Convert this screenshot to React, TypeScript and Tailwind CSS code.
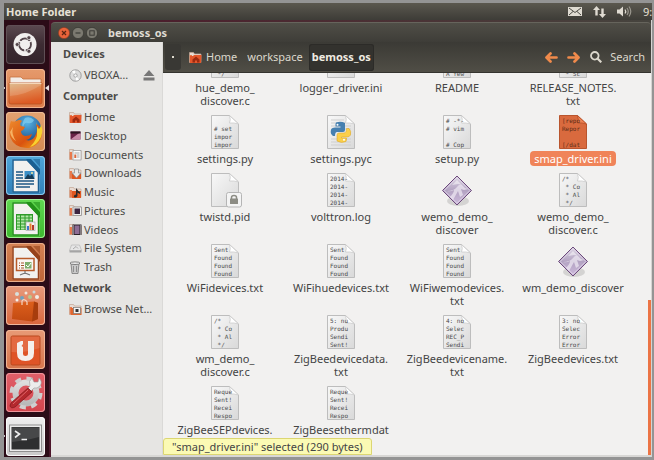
import type { ReactNode } from 'react';

type FileKind = 'text' | 'python' | 'locked' | 'exec';

interface FileItem {
  label: string[];
  kind: FileKind;
  preview?: string;
  selected?: boolean;
}

const files: FileItem[] = [
  { label: ['hue_demo_', 'discover.c'], kind: 'text', preview: '\n\n\n */' },
  { label: ['logger_driver.ini'], kind: 'text' },
  { label: ['README'], kind: 'text', preview: '\n\n\nA few' },
  { label: ['RELEASE_NOTES.', 'txt'], kind: 'text', preview: '\n\n\n * Sc' },
  { label: ['settings.py'], kind: 'text', preview: '\n# set\nimpor\nimpor' },
  { label: ['settings.pyc'], kind: 'python' },
  { label: ['setup.py'], kind: 'text', preview: '# -*-\n# vim\n\n# Cop' },
  { label: ['smap_driver.ini'], kind: 'text', preview: '[repo\nRepor\n\n[/dat', selected: true },
  { label: ['twistd.pid'], kind: 'locked' },
  { label: ['volttron.log'], kind: 'text', preview: '2014-\n2014-\n2014-\n2014-' },
  { label: ['wemo_demo_', 'discover'], kind: 'exec' },
  { label: ['wemo_demo_', 'discover.c'], kind: 'text', preview: '/*\n * Co\n * Al\n */' },
  { label: ['WiFidevices.txt'], kind: 'text', preview: 'Sent\nFound\nFound\nFound' },
  { label: ['WiFihuedevices.txt'], kind: 'text', preview: 'Sent\nFound\nFound\nFound' },
  { label: ['WiFiwemodevices.', 'txt'], kind: 'text', preview: 'Sent\nFound\nFound\nFound' },
  { label: ['wm_demo_discover'], kind: 'exec' },
  { label: ['wm_demo_', 'discover.c'], kind: 'text', preview: '/*\n * Co\n * Al\n */' },
  { label: ['ZigBeedevicedata.', 'txt'], kind: 'text', preview: '5: nu\nProdu\nSendi\nSent!' },
  { label: ['ZigBeedevicename.', 'txt'], kind: 'text', preview: '4: no\nSelec\nREC_P\nSendi' },
  { label: ['ZigBeedevices.txt'], kind: 'text', preview: '3: no\nSelec\nError\nError' },
  { label: ['ZigBeeSEPdevices.', 'txt'], kind: 'text', preview: 'Reque\nSent!\nRecei\nRespo' },
  { label: ['ZigBeesethermdat', 'a.txt'], kind: 'text', preview: 'Reque\nSent!\nRecei\nRespo' },
];

function Defs() {
  return (
    <svg className="absolute size-0" aria-hidden="true">
      <defs>
        <linearGradient id="paper" x1="0" y1="0" x2="1" y2="1">
          <stop offset="0" stopColor="#f8f8f8" />
          <stop offset="1" stopColor="#d9d9d9" />
        </linearGradient>
        <linearGradient id="folderFace" x1="0" y1="0" x2="0.3" y2="1">
          <stop offset="0" stopColor="#d9b27c" />
          <stop offset="0.5" stopColor="#e0814a" />
          <stop offset="1" stopColor="#dc5a24" />
        </linearGradient>
        <linearGradient id="gem" x1="0" y1="0" x2="0" y2="1">
          <stop offset="0" stopColor="#ddd5e4" />
          <stop offset="0.5" stopColor="#b3a3c2" />
          <stop offset="1" stopColor="#cdb9dc" />
        </linearGradient>
        <radialGradient id="globe" cx="0.5" cy="0.25" r="0.8">
          <stop offset="0" stopColor="#57b5e6" />
          <stop offset="1" stopColor="#123a78" />
        </radialGradient>
        <linearGradient id="fox" x1="0" y1="0" x2="1" y2="1">
          <stop offset="0" stopColor="#ee8a2c" />
          <stop offset="0.6" stopColor="#d9520f" />
          <stop offset="1" stopColor="#f5a31c" />
        </linearGradient>
        <linearGradient id="bag" x1="0" y1="0" x2="0" y2="1">
          <stop offset="0" stopColor="#dd5f1c" />
          <stop offset="1" stopColor="#c24a12" />
        </linearGradient>
        <linearGradient id="gearFill" x1="0" y1="0" x2="0" y2="1">
          <stop offset="0" stopColor="#dedede" />
          <stop offset="1" stopColor="#b9b9b9" />
        </linearGradient>
      </defs>
    </svg>
  );
}

function FileIcon({ item }: { item: FileItem }) {
  if (item.kind === 'exec') {
    return (
      <svg className="size-[34px]" viewBox="0 0 34 34" aria-hidden="true">
        <ellipse cx="18" cy="28" rx="11" ry="5" fill="#000" opacity="0.12" />
        <path d="M17 3 31.500 17.500 17 32 2.500 17.500Z" fill="url(#gem)" stroke="#6d4a7c" strokeWidth="1" />
        <path d="M17 4.700 29.800 17.500 17 30.300 4.200 17.500Z" fill="none" stroke="#e6deec" strokeWidth="0.700" />
        <path d="M7 18q7 0 10-4 2-3 5-2 2 3 6 4l-4 1-3-1 2 6-3 2-2-6-5 9-3-3q4-4 4-7-3 2-7 1Z" fill="#efe9f4" opacity="0.7" />
        <path d="M12 12 17 7l5 5-4-1Z" fill="#fff" opacity="0.5" />
      </svg>
    );
  }
  const selected = item.selected === true;
  return (
    <span className="relative block h-[34px] w-[28px]">
      <svg className="absolute inset-0 size-full overflow-visible" viewBox="0 0 28 34" aria-hidden="true">
        <path
          d="M.5.5H18.500L27.500 9V33.500H.5Z"
          fill={selected ? '#d96a3e' : 'url(#paper)'}
          stroke={selected ? '#b9552e' : '#bdbdbd'}
        />
        <path
          d="M18.500.5Q20 5 18.500 8Q23 7.500 27.500 9Z"
          fill={selected ? '#ef8355' : '#fff'}
          stroke={selected ? '#b04a24' : '#c6c6c6'}
          strokeWidth="0.700"
        />
        {item.kind === 'python' && (
          <g>
            <path d="M4 5H17M4 8H18M4 11H24M4 14H24M4 24H24M4 27H24M4 30H24" stroke="#cfcfcf" />
            <path d="M9 7.500Q14 6 18 8V15Q18 17 16 17H10Q8 17 8 21H6Q3 19 4 14.500Q5 12.500 8 12.500H13.500V11.500H8.500V9Z" fill="#4680b0" />
            <path d="M19 26.500Q14 28.500 10 26V20Q10 18 12 18H17Q19.500 18 19.500 13.500H22Q24.500 16 23.500 20Q22.500 22 20 22H14.500V23H19.500V25Z" fill="#fbcf4a" stroke="#d9a31f" strokeWidth="0.500" />
            <circle cx="10.500" cy="9.700" r="1" fill="#fff" />
            <circle cx="17" cy="24.700" r="1" fill="#fff" />
          </g>
        )}
        {item.kind === 'locked' && (
          <g>
            <rect x="15.500" y="19.500" width="15" height="14.500" rx="2" fill="#f4f4f4" stroke="#b5b5b5" />
            <rect x="19" y="25.500" width="8" height="5.500" rx="0.500" fill="#8c8c84" />
            <path d="M20.500 26V24.500Q20.500 22.500 23 22.500T25.500 24.500V26" fill="none" stroke="#8c8c84" strokeWidth="1.500" />
          </g>
        )}
      </svg>
      {item.preview && (
        <span
          className={
            'relative block whitespace-pre pt-[2px] pl-[3px] text-left font-["DejaVu_Sans_Mono",monospace] text-[6px] leading-[8px] ' +
            (selected ? 'text-[#5c2a16]' : 'text-[#4a4a4a]')
          }
        >
          {item.preview}
        </span>
      )}
    </span>
  );
}

function FileTile({ item }: { item: FileItem }) {
  return (
    <li>
      <button type="button" className="flex w-full flex-col items-center pb-2">
        <FileIcon item={item} />
        <span
          className={
            'mt-[3px] rounded-[3px] px-[3px] text-center text-[11px] leading-[13px] whitespace-nowrap ' +
            (item.selected ? 'bg-[#f08459] text-white ring-1 ring-[#f08459]' : '')
          }
        >
          {item.label.map((line) => (
            <span key={line} className="block">
              {line}
            </span>
          ))}
        </span>
      </button>
    </li>
  );
}

function MiniFolder({ children }: { children?: ReactNode }) {
  return (
    <svg className="size-[13px] shrink-0" viewBox="0 0 13 13" aria-hidden="true">
      <path d="M.5 1.500H4.500L5.500 3H12V11.500H.5Z" fill="#e9dcd4" stroke="#c2a594" strokeWidth="0.700" />
      <path d="M.7 4H3V11.500H.7Z" fill="#e8794c" />
      {children}
    </svg>
  );
}

const homeIcon = (
  <MiniFolder>
    <path d="M1 5H4L5 4H12.500L12 12H1Z" fill="#e4572b" />
    <path d="M3.500 8.500 7 5.500 10.500 8.500V11.500H8V9.500H6V11.500H3.500Z" fill="#9c2a10" />
  </MiniFolder>
);

const places: { label: string; icon: ReactNode }[] = [
  { label: 'Home', icon: homeIcon },
  {
    label: 'Desktop',
    icon: (
      <svg className="size-[13px] shrink-0" viewBox="0 0 13 13" aria-hidden="true">
        <rect x="1" y="2" width="11" height="9" fill="#6a2347" stroke="#eee" />
        <path d="M1.500 10.500 11.500 3V10.500Z" fill="#c78aa6" />
        <rect x="1.500" y="2.500" width="10" height="2" fill="#2d1622" />
      </svg>
    ),
  },
  {
    label: 'Documents',
    icon: (
      <MiniFolder>
        <rect x="4" y="2.500" width="8" height="9.500" fill="#fafafa" stroke="#999" strokeWidth="0.700" />
        <path d="M5.500 5H10.500M8 7H10.500M8 9H10.500" stroke="#aaa" />
        <path d="M5.300 6.500H7.300V10H5.300Z" fill="#d9683e" />
      </MiniFolder>
    ),
  },
  {
    label: 'Downloads',
    icon: (
      <MiniFolder>
        <path d="M3 7H12V12H3Z" fill="#e0561f" />
        <path d="M5.500 2H9.500V6H12L7.500 11 3 6H5.500Z" fill="#e8e8e8" stroke="#888" strokeWidth="0.700" />
      </MiniFolder>
    ),
  },
  {
    label: 'Music',
    icon: (
      <MiniFolder>
        <path d="M3 5H12V12H3Z" fill="#e0561f" />
        <path d="M7 2Q9 5 11 6V8Q9.500 7 8.500 6.500V10Q7.500 12 5.500 11.500Q4 10.500 5.500 9L7 8.500Z" fill="#2a2a2a" />
      </MiniFolder>
    ),
  },
  {
    label: 'Pictures',
    icon: (
      <MiniFolder>
        <rect x="4" y="3" width="8.500" height="8.500" fill="#eee" stroke="#888" strokeWidth="0.700" />
        <rect x="5.500" y="4.500" width="5.500" height="5.500" fill="#3b2540" />
      </MiniFolder>
    ),
  },
  {
    label: 'Videos',
    icon: (
      <MiniFolder>
        <rect x="3.500" y="1.500" width="9" height="10.500" fill="#2b2028" />
        <rect x="5.500" y="2.500" width="5" height="8.500" fill="#8d6c94" />
        <path d="M4.500 2.500V11.500M11.500 2.500V11.500" stroke="#ddd" strokeDasharray="1 1" />
      </MiniFolder>
    ),
  },
  {
    label: 'File System',
    icon: (
      <svg className="size-[13px] shrink-0" viewBox="0 0 13 13" aria-hidden="true">
        <path d="M2.500 3H10.500L12.500 8.500H.5Z" fill="#e6e6e6" stroke="#b5b5b5" strokeWidth="0.700" />
        <path d="M.5 8.500H12.500V10.500H.5Z" fill="#a5a5a5" />
        <path d="M4 7 7 4.500 9 6.500" fill="none" stroke="#aaa" />
      </svg>
    ),
  },
  {
    label: 'Trash',
    icon: (
      <svg className="size-[13px] shrink-0" viewBox="0 0 13 13" aria-hidden="true">
        <path d="M2 2.500 3 12.500H9L10 2.500Z" fill="#c9c9c9" stroke="#777" strokeWidth="0.800" />
        <ellipse cx="6" cy="2.200" rx="5" ry="1.300" fill="#eee" stroke="#666" strokeWidth="0.800" />
        <path d="M4.500 5V11M7.500 5V11" stroke="#8f8f8f" />
      </svg>
    ),
  },
];

function SideHeading({ children }: { children: ReactNode }) {
  return <h2 className="h-6 pl-3 text-[11px] leading-6 font-bold">{children}</h2>;
}

function SideItem({ icon, label }: { icon: ReactNode; label: string }) {
  return (
    <a href="#" className="flex h-[18px] items-center gap-[2px] pl-[18px] text-[11px] leading-[18px] whitespace-nowrap">
      {icon}
      {label}
    </a>
  );
}

function Sidebar() {
  return (
    <nav className="w-[112px] shrink-0 overflow-hidden border-r border-[#dad9d7] bg-[#e6e5e3] text-[#4b4a48]">
      <SideHeading>Devices</SideHeading>
      <div className="flex items-center justify-between pr-[7px]">
        <SideItem
          label="VBOXA…"
          icon={
            <svg className="size-[13px] shrink-0" viewBox="0 0 13 13" aria-hidden="true">
              <circle cx="6.500" cy="6.500" r="5.700" fill="#dcdcdc" stroke="#8d8d8d" strokeWidth="0.800" />
              <path d="M6.500 6.500 3 2.500A5 5 0 0 1 6 1.500ZM6.500 6.500 10 10.500A5 5 0 0 1 7 11.500Z" fill="#fff" />
              <circle cx="6.500" cy="6.500" r="1.700" fill="#f5f5f5" stroke="#999" strokeWidth="0.800" />
            </svg>
          }
        />
        <button type="button" aria-label="Eject">
          <svg className="size-[12px]" viewBox="0 0 12 12" aria-hidden="true">
            <path d="M6 1 11.300 7H.7Z" fill="#777" />
            <rect x="0.500" y="8.500" width="11" height="3" fill="#777" />
          </svg>
        </button>
      </div>
      <SideHeading>Computer</SideHeading>
      <ul className="flex h-[168px] flex-col justify-between">
        {places.map((place) => (
          <li key={place.label}>
            <SideItem {...place} />
          </li>
        ))}
      </ul>
      <SideHeading>Network</SideHeading>
      <SideItem
        label="Browse Net…"
        icon={
          <MiniFolder>
            <path d="M2 5H12.500V12H2Z" fill="#e0662f" />
            <rect x="4.500" y="4.500" width="7" height="6" fill="#f3f3f3" stroke="#777" strokeWidth="0.700" />
            <rect x="6.500" y="6" width="3" height="3" fill="#333" />
          </MiniFolder>
        }
      />
    </nav>
  );
}

function OfficePage({ edge, children }: { edge: string; children: ReactNode }) {
  return (
    <g>
      <path d="M6 3H21L34 16V37H6Z" fill="#fff" opacity="0.25" />
      <path d="M7 4H21L32.500 16V36H7Z" fill="#f2f1ef" stroke={edge} strokeWidth="1.500" />
      <path d="M20 3H25L34 13V19Z" fill={edge} />
      <path d="M27 3H34V11Z" fill={edge} opacity="0.6" />
      {children}
    </g>
  );
}

const launchers: { name: string; tile: string; art: ReactNode }[] = [
  {
    name: 'Dash',
    tile: 'bg-linear-to-b from-[#5b4a50] via-[#3d2c33] to-[#33232a] ring-1 ring-inset ring-[#5f4f55]',
    art: (
      <g>
        <circle cx="19" cy="19.500" r="11.500" fill="#f1efee" />
        <circle cx="19" cy="19.500" r="5.900" fill="none" stroke="#54464b" strokeWidth="2" />
        <g stroke="#f1efee" strokeWidth="1.500">
          <path d="M19 19.500 12.500 15.700M19 19.500V27M19 19.500 25.500 15.700" />
        </g>
        <circle cx="19" cy="19.500" r="4.800" fill="#f1efee" />
        <g fill="#54464b" stroke="#f1efee" strokeWidth="0.700">
          <circle cx="11.200" cy="19.500" r="2" />
          <circle cx="22.900" cy="12.700" r="2" />
          <circle cx="22.900" cy="26.300" r="2" />
        </g>
      </g>
    ),
  },
  {
    name: 'Home Folder',
    tile: 'bg-linear-to-b from-[#e59a6c] to-[#dc7a48] ring-1 ring-inset ring-[#efb48f]',
    art: (
      <g>
        <path d="M4 8H15L17 10H35V16H4Z" fill="#f3ede8" stroke="#c4713f" strokeWidth="0.800" />
        <path d="M3 14H36V33Q36 35 34 35H5Q3 35 3 33Z" fill="url(#folderFace)" stroke="#b8501e" strokeWidth="0.800" />
        <path d="M3.500 14.500H35.500" stroke="#f3d0ae" />
        <path d="M4 27Q20 26 35 16V14H4Z" fill="#fff" opacity="0.15" />
      </g>
    ),
  },
  {
    name: 'Firefox',
    tile: 'bg-linear-to-b from-[#e3a271] to-[#d58a52] ring-1 ring-inset ring-[#ecbd97]',
    art: (
      <g>
        <circle cx="21" cy="18" r="14.500" fill="url(#globe)" />
        <path d="M19 6Q24 4 28 8 26 12 22 11T17 16Q15 12 19 6Z" fill="#85cef0" opacity="0.7" />
        <path
          d="M5 9Q8 10 10 9 14 7 16 9 13 12 15 14L19 15Q18 18 15 19 15 23 19 24 23 24 26 22 25 27 20 28 27 30 30 22 32 17 30 12 35 14 36 20 36 33 23 36 9 37 4 25 2 16 5 9Z"
          fill="url(#fox)"
        />
        <path d="M31 10Q30 14 33 17 36 14 34 11 38 17 35 25 31 33 24 35 32 27 31 20 31 15 31 10Z" fill="#f8d12f" />
        <path d="M7 15Q5 22 10 29 5 26 4 20Z" fill="#f7b263" />
      </g>
    ),
  },
  {
    name: 'LibreOffice Writer',
    tile: 'bg-linear-to-b from-[#4fa6da] to-[#2f7fb8] ring-1 ring-inset ring-[#8cc7ea]',
    art: (
      <OfficePage edge="#1b5f92">
        <path d="M10 16H17M10 19H17M10 22H17M10 25H28M10 28H28M10 31H24" stroke="#1d5785" strokeWidth="1.500" />
        <rect x="18.500" y="15" width="10" height="8" fill="#3b8fc6" />
        <path d="M18.500 23 22 18 24 20 26 18 28.500 23Z" fill="#173b56" />
        <circle cx="26" cy="17" r="1" fill="#f6e9a0" />
      </OfficePage>
    ),
  },
  {
    name: 'LibreOffice Calc',
    tile: 'bg-linear-to-b from-[#62d852] to-[#3cb82e] ring-1 ring-inset ring-[#a0f094]',
    art: (
      <OfficePage edge="#22911a">
        <rect x="10" y="15" width="17" height="16" fill="#2f9a2a" />
        <path d="M11 17.500H26M11 20.500H26M11 23.500H26M11 26.500H26M11 29.500H26" stroke="#b4e8a8" strokeWidth="1.800" />
        <path d="M14.500 15V31M19 15V31M23 15V31" stroke="#2f9a2a" />
        <rect x="20" y="23" width="9" height="8.500" fill="#f4f4f4" stroke="#999" strokeWidth="0.600" />
        <path d="M22 31V27" stroke="#3c78c8" strokeWidth="2" />
        <path d="M24.500 31V24.500" stroke="#e6802c" strokeWidth="2" />
        <path d="M27 31V26" stroke="#b33a2c" strokeWidth="2" />
      </OfficePage>
    ),
  },
  {
    name: 'LibreOffice Impress',
    tile: 'bg-linear-to-b from-[#d68355] to-[#bd6436] ring-1 ring-inset ring-[#e9ae8b]',
    art: (
      <OfficePage edge="#96421a">
        <rect x="10.500" y="15.500" width="17.500" height="12" fill="#fbf6f2" stroke="#b85a28" strokeWidth="1.500" />
        <path d="M13 20H18M13 22.500H18M13 25H18" stroke="#a1542c" strokeDasharray="1 1 4" />
        <rect x="19" y="19" width="6.500" height="6.500" fill="#7fae6c" />
        <path d="M20 22 22 24 25 20" stroke="#fff" fill="none" />
        <path d="M19 28V31M14 32 19 30 24 32" stroke="#777" fill="none" strokeWidth="1.300" />
      </OfficePage>
    ),
  },
  {
    name: 'Ubuntu Software Center',
    tile: 'bg-linear-to-b from-[#e79a7c] to-[#d9663c] ring-1 ring-inset ring-[#efb69d]',
    art: (
      <g>
        <circle cx="11" cy="8" r="2" fill="#d9e0dc" />
        <circle cx="16" cy="12" r="2" fill="#6fa3bf" />
        <circle cx="20" cy="7" r="1.500" fill="#f0e7dd" />
        <circle cx="24" cy="11" r="2" fill="#b7c98f" />
        <circle cx="28" cy="6" r="1.500" fill="#c9d8dd" />
        <circle cx="31" cy="11" r="2" fill="#f3ece5" />
        <circle cx="11" cy="14" r="1.500" fill="#f6efe8" />
        <path d="M7 17 28 15.500 32 17V33L26 35.500 6 33Z" fill="url(#bag)" />
        <path d="M28 15.500 32 17V33L26 35.500Z" fill="#a83d0d" />
        <path d="M16 19V15Q17 13 19 14T21 16V19" fill="none" stroke="#f4d7c4" strokeWidth="1.200" />
      </g>
    ),
  },
  {
    name: 'Ubuntu One',
    tile: 'bg-linear-to-b from-[#e89a76] to-[#d6754c] ring-1 ring-inset ring-[#efb596]',
    art: (
      <g>
        <rect x="5" y="6" width="29" height="29" rx="1.500" fill="#df5427" stroke="#b9481f" />
        <path d="M5.500 6.500H33.500V18Q20 23 5.500 22Z" fill="#fff" opacity="0.13" />
        <path d="M11 13 15 11H17V14L15.500 16 17 17V24Q17 26 19.500 26T22 24V11H28V23Q28 31 19.500 31T11 23Z" fill="#f4efec" />
      </g>
    ),
  },
  {
    name: 'System Settings',
    tile: 'bg-linear-to-b from-[#e0606a] to-[#d3444c] ring-1 ring-inset ring-[#ee959b]',
    art: (
      <g>
        <circle cx="20" cy="20" r="10.500" fill="none" stroke="url(#gearFill)" strokeWidth="6" />
        <circle cx="20" cy="20" r="14.500" fill="none" stroke="#cfcfcf" strokeWidth="4" strokeDasharray="6 5.390" />
        <path d="M24 13Q22 8 26 5L28 9 32 9 33 5Q37 9 34 13 31 16 28 15L25 18 21 16Z" fill="#ececec" stroke="#999" strokeWidth="0.600" />
        <path d="M22 15 26 19 9 34Q5 36 4 33 4 31 6 29Z" fill="#b3282d" stroke="#7c1519" strokeWidth="0.700" />
        <path d="M22 17 7 31" stroke="#de6468" />
      </g>
    ),
  },
  {
    name: 'Terminal',
    tile: 'bg-linear-to-b from-[#efefef] to-[#c9c9c9] ring-1 ring-inset ring-[#fafafa]',
    art: (
      <g>
        <rect x="3.500" y="8" width="32" height="26.500" fill="#ececec" stroke="#8f8f8f" />
        <rect x="5.500" y="10" width="28" height="22.500" fill="#2e2f30" />
        <path d="M6 10.500H33V20Q20 24 6 25Z" fill="#fff" opacity="0.12" />
        <path d="M9 14 13.500 17 9 20.500M15.500 22.500H21" fill="none" stroke="#eee" strokeWidth="1.600" />
      </g>
    ),
  },
];

const running = ['Home Folder', 'Terminal'];

function Launcher() {
  return (
    <nav className="flex w-[46px] shrink-0 flex-col justify-between border-r border-[#4a1a2c] bg-[#2b0c17] pt-[5px] pb-px">
      {launchers.map((app) => (
        <button key={app.name} type="button" aria-label={app.name} className="flex w-full items-center">
          <span className="w-[2px] shrink-0">
            {running.includes(app.name) && <span className="block h-[2px] w-px bg-[#cfc6c9]" />}
          </span>
          <span className={'size-[39px] shrink-0 rounded-[4px] ' + app.tile}>
            <svg className="size-full" viewBox="0 0 39 39" aria-hidden="true">
              {app.art}
            </svg>
          </span>
          {app.name === 'Home Folder' && (
            <svg className="h-[6px] w-[4px]" viewBox="0 0 4 6" aria-hidden="true">
              <path d="M4 0V6L0 3Z" fill="#e6e0e2" />
            </svg>
          )}
        </button>
      ))}
    </nav>
  );
}

function TopPanel() {
  return (
    <header className="flex h-[17px] shrink-0 items-center bg-linear-to-b from-[#5b584f] to-[#3d3c37] text-[11px] leading-[17px] text-[#e6e1d6]">
      <h1 className="flex-1 pl-[2px] text-[11px] font-bold">Home Folder</h1>
      <button type="button" aria-label="Messages">
        <svg className="h-[9px] w-[14px]" viewBox="0 0 14 9" aria-hidden="true">
          <rect width="14" height="9" fill="#dfdbd2" />
          <path d="M1 1 7 5.500 13 1M1 8 5 4.500M13 8 9 4.500" fill="none" stroke="#4a4943" />
        </svg>
      </button>
      <button type="button" aria-label="Network" className="ml-[11px]">
        <svg className="h-[12px] w-[13px]" viewBox="0 0 13 12" aria-hidden="true">
          <path d="M3.500 0 7 4H4.700V9.500H2.300V4H0ZM9.500 12 6 8H8.300V2.500H10.700V8H13Z" fill="#dfdbd2" />
        </svg>
      </button>
      <button type="button" aria-label="Sound" className="ml-[11px]">
        <svg className="h-[11px] w-[15px]" viewBox="0 0 15 11" aria-hidden="true">
          <path d="M0 3.500H2.500L6 .5V10.500L2.500 7.500H0Z" fill="#dfdbd2" />
          <path d="M8 3.500Q9.500 5.500 8 7.500" fill="none" stroke="#dfdbd2" strokeWidth="1.200" />
          <path d="M10 2Q12.500 5.500 10 9M12 .5Q15.500 5.500 12 10.500" fill="none" stroke="#99968d" strokeWidth="1.200" />
        </svg>
      </button>
      <span className="ml-[11px] w-[9px]">9:</span>
    </header>
  );
}

function Toolbar() {
  return (
    <div className="flex h-[31px] shrink-0 items-center border-b border-[#35342f] bg-linear-to-b from-[#3b3a35] to-[#504e46] text-[11px] text-[#dcd8cd]">
      <button
        type="button"
        aria-label="Scroll path"
        className="ml-[2px] flex h-[26px] w-[16px] items-center justify-center rounded-[3px] bg-[#393834]"
      >
        <span className="size-[2px] bg-[#dcd8cd]" />
      </button>
      <button type="button" className="ml-2 flex items-center gap-1">
        {homeIcon}
        Home
      </button>
      <button type="button" className="ml-[10px]">
        workspace
      </button>
      <button type="button" className="ml-[6px] h-[27px] rounded-[3px] bg-[#33322e] px-[3px] font-bold text-[#efebe1] ring-1 ring-inset ring-[#2c2b28]">
        bemoss_os
      </button>
      <span className="flex-1" />
      <button type="button" aria-label="Back">
        <svg className="h-[11px] w-[14px]" viewBox="0 0 14 11" aria-hidden="true">
          <path d="M6.500 1.500 2.500 5.500 6.500 9.500M3 5.500H12.500" fill="none" stroke="#f08a4b" strokeWidth="2.700" strokeLinejoin="round" strokeLinecap="round" />
        </svg>
      </button>
      <button type="button" aria-label="Forward" className="ml-[9px]">
        <svg className="h-[11px] w-[14px]" viewBox="0 0 14 11" aria-hidden="true">
          <path d="M7.500 1.500 11.500 5.500 7.500 9.500M11 5.500H1.500" fill="none" stroke="#f08a4b" strokeWidth="2.700" strokeLinejoin="round" strokeLinecap="round" />
        </svg>
      </button>
      <button type="button" className="mr-[6px] ml-[9px] flex items-center gap-2">
        <svg className="size-[12px]" viewBox="0 0 12 12" aria-hidden="true">
          <circle cx="4.800" cy="4.800" r="3.800" fill="none" stroke="#dcd8cd" strokeWidth="1.800" />
          <path d="M7.500 7.500 11.300 11.300" stroke="#dcd8cd" strokeWidth="2.200" />
        </svg>
        Search
      </button>
    </div>
  );
}

function TitleBar() {
  return (
    <div className="flex h-[20px] shrink-0 items-center gap-[2px] rounded-t-[4px] border-t border-[#66645c] bg-linear-to-b from-[#504e47] to-[#3e3d38] pl-[7px]">
      <button type="button" aria-label="Close" className="size-[12px] rounded-full">
        <svg className="size-full" viewBox="0 0 12 12" aria-hidden="true">
          <circle cx="6" cy="6" r="5.600" fill="#e9633a" stroke="#8c3a20" strokeWidth="0.600" />
          <path d="M4 4 8 8M8 4 4 8" stroke="#5a2412" strokeWidth="1.200" />
        </svg>
      </button>
      <button type="button" aria-label="Minimize" className="size-[12px]">
        <svg className="size-full" viewBox="0 0 12 12" aria-hidden="true">
          <circle cx="6" cy="6" r="5.600" fill="#7b7970" stroke="#33322e" strokeWidth="0.600" />
          <path d="M3.500 6H8.500" stroke="#3c3b37" strokeWidth="1.200" />
        </svg>
      </button>
      <button type="button" aria-label="Maximize" className="size-[12px]">
        <svg className="size-full" viewBox="0 0 12 12" aria-hidden="true">
          <circle cx="6" cy="6" r="5.600" fill="#7b7970" stroke="#33322e" strokeWidth="0.600" />
          <rect x="3.800" y="3.800" width="4.400" height="4.400" fill="none" stroke="#3c3b37" />
        </svg>
      </button>
      <span className="pl-2 text-[11px] leading-[19px] font-bold text-[#dfdbd2]">bemoss_os</span>
    </div>
  );
}

export default function App() {
  return (
    <div className='flex h-screen flex-col bg-[#949494] pt-[3px] pr-[2px] pb-[3px] pl-1 font-["Noto_Sans","Open_Sans",sans-serif]'>
      <Defs />
      <TopPanel />
      <div className="flex min-h-0 flex-1">
        <Launcher />
        <div className="flex min-w-0 flex-1 flex-col border-r border-[#d5d4d2] bg-linear-to-r from-[#4b1429] to-[#46443e] pt-[2px] pl-px">
          <TitleBar />
          <div className="flex min-h-0 flex-1 border-b-2 border-[#d8d7d5]">
            <Sidebar />
            <main className="flex min-w-0 flex-1 flex-col bg-[#f2f1f0]">
              <Toolbar />
              <section aria-label="Files" className="relative flex min-h-0 flex-1 justify-between overflow-hidden text-[#444]">
                <ul className="-mt-[29px] ml-1 grid w-full max-w-[464px] grid-cols-4 content-start">
                  {files.map((item) => (
                    <FileTile key={item.label.join('') + item.kind} item={item} />
                  ))}
                </ul>
                <span className="mt-[227px] w-[3px] shrink-0 bg-[#ec7445]" />
                <p
                  role="status"
                  className="absolute bottom-0 left-0 h-[17px] rounded-t-[3px] border border-[#dcd672] bg-[#fbfab4] px-2 text-[11px] leading-[15px] whitespace-nowrap"
                >
                  "smap_driver.ini" selected (290 bytes)
                </p>
              </section>
            </main>
          </div>
        </div>
      </div>
    </div>
  );
}
